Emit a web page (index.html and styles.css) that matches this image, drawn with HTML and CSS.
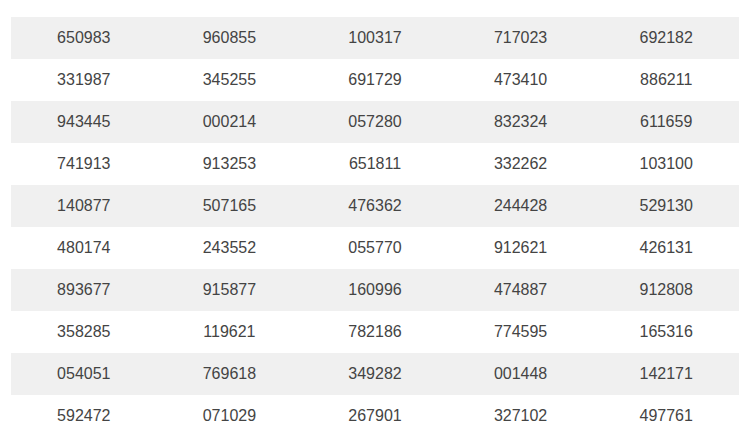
FILE: index.html
```html
<!DOCTYPE html>
<html>
<head>
<meta charset="utf-8">
<link rel="stylesheet" href="styles.css">
</head>
<body>
<div class="wrap">
<table class="grid">
<tbody>
<tr><td>650983</td><td>960855</td><td>100317</td><td>717023</td><td>692182</td></tr>
<tr><td>331987</td><td>345255</td><td>691729</td><td>473410</td><td>886211</td></tr>
<tr><td>943445</td><td>000214</td><td>057280</td><td>832324</td><td>611659</td></tr>
<tr><td>741913</td><td>913253</td><td>651811</td><td>332262</td><td>103100</td></tr>
<tr><td>140877</td><td>507165</td><td>476362</td><td>244428</td><td>529130</td></tr>
<tr><td>480174</td><td>243552</td><td>055770</td><td>912621</td><td>426131</td></tr>
<tr><td>893677</td><td>915877</td><td>160996</td><td>474887</td><td>912808</td></tr>
<tr><td>358285</td><td>119621</td><td>782186</td><td>774595</td><td>165316</td></tr>
<tr><td>054051</td><td>769618</td><td>349282</td><td>001448</td><td>142171</td></tr>
<tr><td>592472</td><td>071029</td><td>267901</td><td>327102</td><td>497761</td></tr>
</tbody>
</table>
</div>
</body>
</html>
```

FILE: styles.css
```css
html, body {
  margin: 0;
  padding: 0;
  background: #fff;
}
.wrap {
  padding: 17px 11px 0 11px;
}
.grid {
  width: 728px;
  border-collapse: collapse;
  table-layout: fixed;
  font-family: "Liberation Sans", Arial, sans-serif;
  font-size: 16px;
  color: #444;
}
.grid td {
  height: 42px;
  padding: 0;
  text-align: center;
  vertical-align: middle;
}
.grid tr:nth-child(odd) td {
  background: #f0f0f0;
}
```
